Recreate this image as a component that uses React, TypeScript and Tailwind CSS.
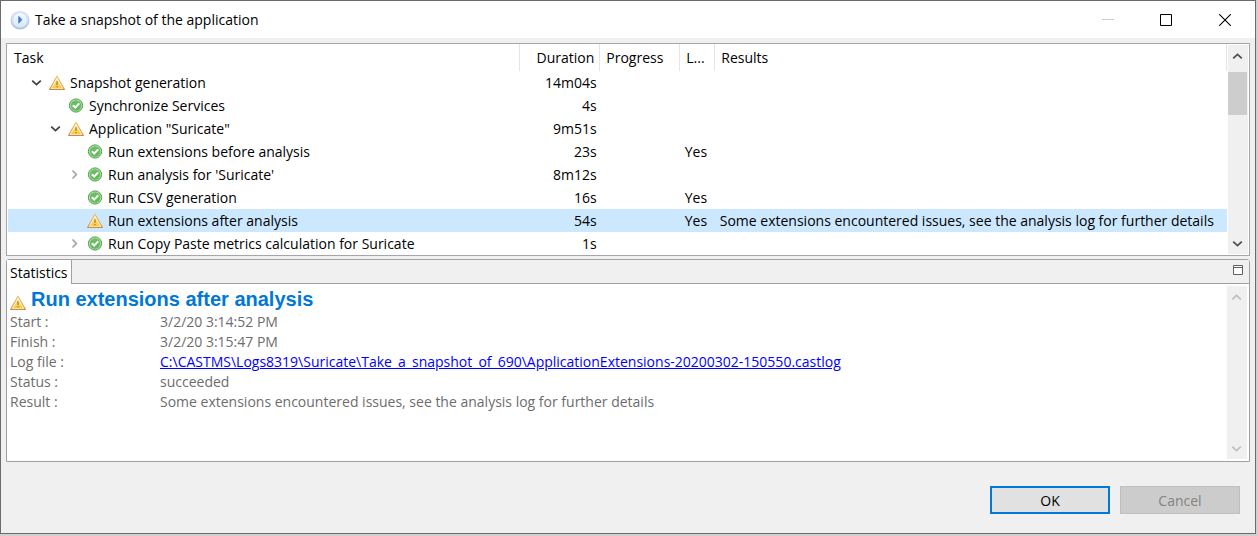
import React from "react";

type Status = "warning" | "ok";
type Expander = "open" | "closed" | "none";

interface Task {
  name: string;
  level: 0 | 1 | 2;
  status: Status;
  expander: Expander;
  duration: string;
  log?: string;
  result?: string;
  selected?: boolean;
}

const tasks: Task[] = [
  { name: "Snapshot generation", level: 0, status: "warning", expander: "open", duration: "14m04s" },
  { name: "Synchronize Services", level: 1, status: "ok", expander: "none", duration: "4s" },
  { name: 'Application "Suricate"', level: 1, status: "warning", expander: "open", duration: "9m51s" },
  { name: "Run extensions before analysis", level: 2, status: "ok", expander: "none", duration: "23s", log: "Yes" },
  { name: "Run analysis for 'Suricate'", level: 2, status: "ok", expander: "closed", duration: "8m12s" },
  { name: "Run CSV generation", level: 2, status: "ok", expander: "none", duration: "16s", log: "Yes" },
  {
    name: "Run extensions after analysis",
    level: 2,
    status: "warning",
    expander: "none",
    duration: "54s",
    log: "Yes",
    result: "Some extensions encountered issues, see the analysis log for further details",
    selected: true,
  },
  { name: "Run Copy Paste metrics calculation for Suricate", level: 2, status: "ok", expander: "closed", duration: "1s" },
];

const indents = ["pl-5", "pl-[39px]", "pl-[58px]"];

function WarningIcon() {
  return (
    <svg width="16" height="16" viewBox="0 0 16 16" className="shrink-0" aria-hidden="true">
      <defs>
        <linearGradient id="warn" x1="0" y1="0" x2="0" y2="1">
          <stop offset="0" stopColor="#fbe9a0" />
          <stop offset="1" stopColor="#f3cb3c" />
        </linearGradient>
        <linearGradient id="warnedge" x1="0" y1="0" x2="0" y2="1">
          <stop offset="0" stopColor="#f0bf6a" />
          <stop offset="1" stopColor="#d9913f" />
        </linearGradient>
      </defs>
      <path d="M8 1.2 15.3 14.3H.7Z" fill="#fffbe9" stroke="url(#warnedge)" strokeWidth="1.1" strokeLinejoin="round" />
      <path d="M8 3.9 13.1 13H2.9Z" fill="url(#warn)" />
      <path d="M.7 14.5H15.3" stroke="#cf8a3c" strokeWidth="1" strokeLinecap="round" />
      <path d="M8 6.2V10" stroke="#bd8a2a" strokeWidth="1.5" />
      <path d="M8 10.9V12.3" stroke="#bd8a2a" strokeWidth="1.5" />
    </svg>
  );
}

function OkIcon() {
  return (
    <svg width="16" height="16" viewBox="0 0 16 16" className="shrink-0" aria-hidden="true">
      <defs>
        <linearGradient id="okfill" x1="0" y1="0" x2="0" y2="1">
          <stop offset="0" stopColor="#6dbd68" />
          <stop offset="1" stopColor="#62b95a" />
        </linearGradient>
      </defs>
      <circle cx="8" cy="7.5" r="6.6" fill="#b4e2aa" stroke="#4a9f4d" strokeWidth="1" />
      <circle cx="8" cy="7.5" r="5.2" fill="url(#okfill)" />
      <path d="M4.8 7.2 7.2 9.6 11.2 5.4" fill="none" stroke="#fff" strokeWidth="2.1" />
    </svg>
  );
}

function StatusIcon({ status }: { status: Status }) {
  return status === "warning" ? <WarningIcon /> : <OkIcon />;
}

function AppIcon() {
  return (
    <svg width="20" height="20" viewBox="0 0 20 20" className="shrink-0" aria-hidden="true">
      <defs>
        <linearGradient id="ring" x1="0" y1="0" x2="0" y2="1">
          <stop offset="0" stopColor="#dfe9f7" />
          <stop offset="1" stopColor="#b3c1da" />
        </linearGradient>
        <linearGradient id="face" x1="0" y1="0" x2="0" y2="1">
          <stop offset="0" stopColor="#f6faff" />
          <stop offset="1" stopColor="#d6e9fb" />
        </linearGradient>
        <linearGradient id="play" x1="0" y1="0" x2="1" y2="0">
          <stop offset="0" stopColor="#2c66b0" />
          <stop offset="1" stopColor="#6ea5e4" />
        </linearGradient>
      </defs>
      <circle cx="10" cy="10" r="8.7" fill="#d5e2f4" stroke="url(#ring)" strokeWidth="1.8" />
      <circle cx="10" cy="10" r="6.8" fill="url(#face)" />
      <path d="M8.4 5.8 12.6 9.8 8.4 13.8Z" fill="url(#play)" />
    </svg>
  );
}

function Chevron({ direction, className }: { direction: "up" | "down" | "right"; className: string }) {
  const paths = {
    up: "M1.2 7.4 5.5 3.4 9.8 7.4",
    down: "M1.2 3.6 5.5 7.6 9.8 3.6",
    right: "M3.5 1.5 7.3 5.5 3.5 9.5",
  };
  return (
    <svg width="11" height="11" viewBox="0 0 11 11" className={className} aria-hidden="true">
      <path d={paths[direction]} fill="none" stroke="currentColor" strokeWidth="1.8" />
    </svg>
  );
}

function TitleBar() {
  return (
    <header className="flex h-[37px] items-center bg-white pl-[9px]">
      <AppIcon />
      <h1 className="grow pl-[5px] leading-5">Take a snapshot of the application</h1>
      <div className="flex h-full">
        <button type="button" disabled aria-label="Minimize" className="flex w-[58px] items-center justify-center">
          <svg width="12" height="12" viewBox="0 0 12 12" aria-hidden="true">
            <path d="M0 5.5H12" stroke="#cccccc" />
          </svg>
        </button>
        <button type="button" aria-label="Maximize" className="flex w-[58px] items-center justify-center">
          <svg width="12" height="12" viewBox="0 0 12 12" aria-hidden="true">
            <path d="M.5.5H11.5V11.5H.5Z" fill="none" stroke="#000" />
          </svg>
        </button>
        <button type="button" aria-label="Close" className="flex w-[60px] items-center justify-center">
          <svg width="12" height="12" viewBox="0 0 12 12" aria-hidden="true">
            <path d="M.2.2 11.8 11.8M11.8.2.2 11.8" stroke="#000" strokeWidth="1.1" />
          </svg>
        </button>
      </div>
    </header>
  );
}

function ScrollBar({ label, disabled = false }: { label: string; disabled?: boolean }) {
  const arrow = disabled ? "text-[#bfbfbf]" : "text-[#505050]";
  return (
    <div className="flex w-5 shrink-0 flex-col bg-[#f0f0f0]">
      <button type="button" disabled={disabled} aria-label={`Scroll ${label} up`} className="flex h-[22px] w-[19px] items-center justify-center">
        <Chevron direction="up" className={arrow} />
      </button>
      <div className="grow pt-[5px]">{!disabled && <div className="h-[43px] w-[19px] bg-[#cdcdcd]" />}</div>
      <button type="button" disabled={disabled} aria-label={`Scroll ${label} down`} className="flex h-[22px] w-[19px] items-center justify-center">
        <Chevron direction="down" className={arrow} />
      </button>
    </div>
  );
}

function TaskTable() {
  return (
    <section className="flex border border-[#a5a5ab] bg-white pl-px">
      <table className="w-full table-fixed border-collapse text-left">
        <colgroup>
          <col className="w-[42%]" />
          <col className="w-20" />
          <col className="w-20" />
          <col className="w-[35px]" />
          <col />
        </colgroup>
        <thead>
          <tr className="h-[27px] whitespace-nowrap">
            <th scope="col" className="border-r border-[#e5e5e5] p-0 pl-1.5 font-normal">Task</th>
            <th scope="col" className="border-r border-[#e5e5e5] p-0 pr-[5px] text-right font-normal">Duration</th>
            <th scope="col" className="border-r border-[#e5e5e5] p-0 pl-1.5 font-normal">Progress</th>
            <th scope="col" className="border-r border-[#e5e5e5] p-0 pl-1.5 font-normal">L...</th>
            <th scope="col" className="border-r border-[#e5e5e5] p-0 pl-1.5 font-normal">Results</th>
          </tr>
        </thead>
        <tbody>
          {tasks.map((task) => (
            <tr key={task.name} className={task.selected ? "h-[23px] bg-[#cce8ff]" : "h-[23px]"}>
              <td className="p-0">
                <div className={`flex items-center ${indents[task.level]}`}>
                  <span className="flex w-[21px] shrink-0">
                    {task.expander !== "none" && (
                      <button type="button" aria-label={`Toggle ${task.name}`} className="flex size-4 items-center justify-center">
                        {task.expander === "open" ? (
                          <Chevron direction="down" className="text-[#404040]" />
                        ) : (
                          <Chevron direction="right" className="text-[#a6a6a6]" />
                        )}
                      </button>
                    )}
                  </span>
                  <StatusIcon status={task.status} />
                  <span className="truncate pl-[5px] leading-5">{task.name}</span>
                </div>
              </td>
              <td className="p-0 pr-[3px] text-right leading-5">{task.duration}</td>
              <td className="p-0" />
              <td className="p-0 pl-[5px] leading-5">{task.log}</td>
              <td className="truncate p-0 pl-[5px] leading-5">{task.result}</td>
            </tr>
          ))}
        </tbody>
      </table>
      <div className="flex py-px pl-px pr-px">
        <ScrollBar label="tasks" />
      </div>
    </section>
  );
}

const details = [
  { label: "Start :", value: "3/2/20 3:14:52 PM" },
  { label: "Finish :", value: "3/2/20 3:15:47 PM" },
  {
    label: "Log file :",
    value: "C:\\CASTMS\\Logs8319\\Suricate\\Take_a_snapshot_of_690\\ApplicationExtensions-20200302-150550.castlog",
    link: true,
  },
  { label: "Status :", value: "succeeded" },
  { label: "Result :", value: "Some extensions encountered issues, see the analysis log for further details" },
];

function Statistics() {
  return (
    <section className="mt-[3px] flex flex-col rounded-t-[3px] border border-[#a0a0a0] bg-white">
      <div role="tablist" className="flex h-6 bg-[#f0f0f0]">
        <button type="button" role="tab" aria-selected="true" className="border-r border-[#a0a0a0] bg-white px-[3px]">
          Statistics
        </button>
        <div className="flex grow items-start justify-end border-b border-[#a0a0a0] pr-1.5 pt-[5px]">
          <button type="button" aria-label="Maximize panel">
            <svg width="10" height="10" viewBox="0 0 10 10" aria-hidden="true" className="block">
              <path d="M.5.5H9.5V9.5H.5ZM.5 2.5H9.5" fill="#fff" stroke="#606060" />
            </svg>
          </button>
        </div>
      </div>
      <div role="tabpanel" className="flex min-h-[177px]">
        <div className="min-w-0 grow pl-[3px] pt-[3px]">
          <h2 className="flex h-[25px] items-end gap-[5px] pb-px">
            <WarningIcon />
            <span className="font-['Liberation_Sans',sans-serif] text-[20px] font-bold leading-6 text-[#0078d7]">
              Run extensions after analysis
            </span>
          </h2>
          <dl className="text-[#6d6d6d]">
            {details.map((item) => (
              <div key={item.label} className="flex leading-5">
                <dt className="w-[150px] shrink-0">{item.label}</dt>
                <dd className="min-w-0 truncate">
                  {item.link ? (
                    <a href="#log" className="text-[#0000ff] underline">
                      {item.value}
                    </a>
                  ) : (
                    item.value
                  )}
                </dd>
              </div>
            ))}
          </dl>
        </div>
        <div className="flex pb-0.5 pr-0.5 pt-0.5">
          <ScrollBar label="statistics" disabled />
        </div>
      </div>
    </section>
  );
}

export default function App() {
  return (
    <div className="flex min-h-screen bg-[#d0d0d0] pb-0.5 pr-0.5 font-['Open_Sans',sans-serif] text-[14px] text-black">
      <div className="flex min-w-0 grow flex-col border border-[#6b6b6d] bg-[#f0f0f0]">
        <TitleBar />
        <main className="flex grow flex-col px-[5px] pt-[5px]">
          <TaskTable />
          <Statistics />
          <div className="flex justify-end gap-2.5 pr-2.5 pt-6">
            <button type="button" className="h-7 w-[120px] border-2 border-[#0078d7] bg-[#e1e1e1]">
              OK
            </button>
            <button type="button" disabled className="h-7 w-[120px] border border-[#bfbfbf] bg-[#cccccc] text-[#838383]">
              Cancel
            </button>
          </div>
        </main>
      </div>
    </div>
  );
}
